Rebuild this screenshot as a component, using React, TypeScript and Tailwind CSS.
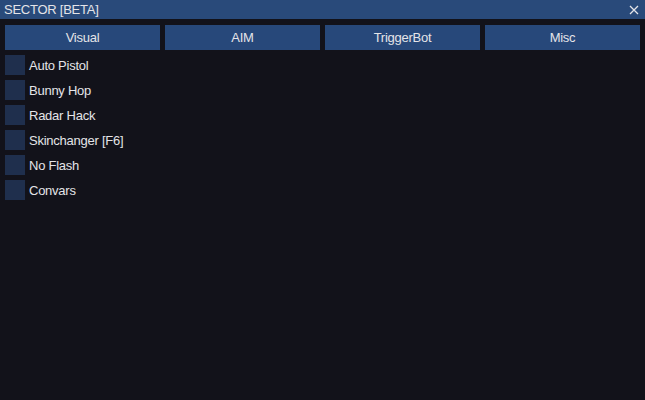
export default function App() {
  const tabs = ['Visual', 'AIM', 'TriggerBot', 'Misc']
  const options = ['Auto Pistol', 'Bunny Hop', 'Radar Hack', 'Skinchanger [F6]', 'No Flash', 'Convars']

  return (
    <div
      className="w-[645px] h-[400px] bg-[#12121a] text-[#e4e4e8] text-[13px] tracking-[-0.25px] overflow-hidden flex flex-col"
      style={{ fontFamily: '"Liberation Sans", Arial, sans-serif' }}
    >
      <div className="h-[19px] bg-[#294a7a] flex items-center justify-between pl-[4px] pr-[6px]">
        <span className="leading-none">SECTOR [BETA]</span>
        <svg width="10" height="10" viewBox="0 0 10 10" className="text-[#e4e4e8]">
          <path d="M1 1L9 9M9 1L1 9" stroke="currentColor" strokeWidth="1.3" />
        </svg>
      </div>

      <div className="grid grid-cols-4 gap-[5px] px-[5px] mt-[6px]">
        {tabs.map((t) => (
          <button key={t} className="h-[25px] bg-[#27487a] flex items-center justify-center leading-none">
            {t}
          </button>
        ))}
      </div>

      <div className="flex flex-col gap-[5px] px-[5px] mt-[5px]">
        {options.map((o) => (
          <label key={o} className="flex items-center gap-[4px] h-[20px]">
            <span className="w-[20px] h-[20px] bg-[#1f2f4d] shrink-0" />
            <span className="leading-none">{o}</span>
          </label>
        ))}
      </div>
    </div>
  )
}
